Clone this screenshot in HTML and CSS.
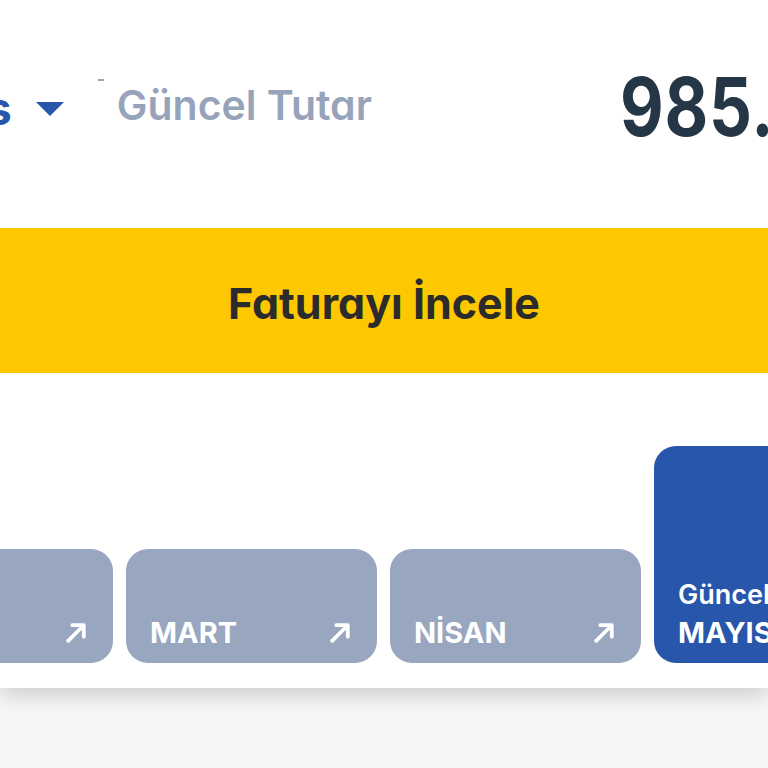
FILE: index.html
```html
<!DOCTYPE html>
<html lang="tr">
<head>
<meta charset="utf-8">
<link rel="stylesheet" href="styles.css">
</head>
<body>
<div class="panel">
  <div class="top">
    <div class="selector">
      <span class="sel-text">s</span>
      <svg class="caret" width="28" height="14" viewBox="0 0 28 14"><path d="M0 0 H28 L14 14 Z" fill="#2756AB"/></svg>
    </div>
    <span class="tick"></span>
    <span class="label">Güncel Tutar</span>
    <span class="amount">985.</span>
  </div>
  <div class="cta">Faturayı İncele</div>
  <div class="months">
    <div class="card"><span class="m"></span><svg class="arr" viewBox="0 0 24 24"><path d="M4 20 L19 5 M8 5 H19 V16" stroke="#fff" stroke-width="3.6" fill="none" stroke-linecap="round" stroke-linejoin="round"/></svg></div>
    <div class="card"><span class="m">MART</span><svg class="arr" viewBox="0 0 24 24"><path d="M4 20 L19 5 M8 5 H19 V16" stroke="#fff" stroke-width="3.6" fill="none" stroke-linecap="round" stroke-linejoin="round"/></svg></div>
    <div class="card"><span class="m">NİSAN</span><svg class="arr" viewBox="0 0 24 24"><path d="M4 20 L19 5 M8 5 H19 V16" stroke="#fff" stroke-width="3.6" fill="none" stroke-linecap="round" stroke-linejoin="round"/></svg></div>
    <div class="card current"><div class="cur-text"><span class="g">Güncel</span><span class="m">MAYIS</span></div></div>
  </div>
</div>
<div class="below"></div>
</body>
</html>
```
FILE: styles.css
```css
html, body {
  margin: 0;
  padding: 0;
  width: 768px;
  height: 768px;
  overflow: hidden;
  background: #F5F6F8;
  font-family: Inter, "Noto Sans", sans-serif;
  font-feature-settings: "cv11" 1;
}
.panel {
  background: #fff;
  height: 688px;
  box-shadow: 0 6px 22px rgba(0,0,0,0.18);
  position: relative;
  overflow: hidden;
}
.top {
  height: 228px;
  display: flex;
  align-items: flex-start;
  white-space: nowrap;
}
.selector {
  display: flex;
  align-items: center;
  margin-left: -14px;
  margin-top: 80px;
}
.sel-text {
  font-size: 46px;
  font-weight: 700;
  color: #2756AB;
  line-height: 56px;
}
.caret {
  margin-left: 24px;
  margin-top: 2px;
}
.tick {
  width: 6px;
  height: 2px;
  background: #9AA6BC;
  margin-left: 34px;
  margin-top: 79px;
}
.label {
  font-size: 41px;
  font-weight: 600;
  color: #97A3BA;
  margin-left: 13px;
  margin-top: 79px;
  line-height: 52px;
}
.amount {
  font-size: 81px;
  font-weight: 700;
  color: #253746;
  margin-left: auto;
  margin-right: -40px;
  margin-top: 57px;
  line-height: 100px;
  letter-spacing: 1px;
  transform: scaleX(0.83);
  transform-origin: left center;
  width: 188px;
}
.cta {
  height: 145px;
  background: #FDC800;
  display: flex;
  align-items: center;
  justify-content: center;
  font-size: 43px;
  font-weight: 700;
  color: #2B2B2B;
  padding-top: 4px;
  box-sizing: border-box;
}
.months {
  display: flex;
  align-items: flex-end;
  gap: 13px;
  margin-left: -138px;
  margin-top: 73px;
}
.card {
  flex: 0 0 251px;
  height: 114px;
  border-radius: 22px;
  background: #98A6BF;
  display: flex;
  align-items: flex-end;
  justify-content: space-between;
  padding: 0 24px 12px 24px;
  box-sizing: border-box;
  color: #fff;
}
.card .m {
  font-size: 29px;
  font-weight: 700;
  line-height: 36px;
}
.arr {
  width: 25px;
  height: 25px;
  margin-bottom: 6px;
}
.card.current {
  height: 217px;
  background: #2756AB;
  justify-content: flex-start;
}
.cur-text {
  display: flex;
  flex-direction: column;
}
.cur-text .g {
  font-size: 27px;
  font-weight: 600;
  line-height: 40px;
}
```
